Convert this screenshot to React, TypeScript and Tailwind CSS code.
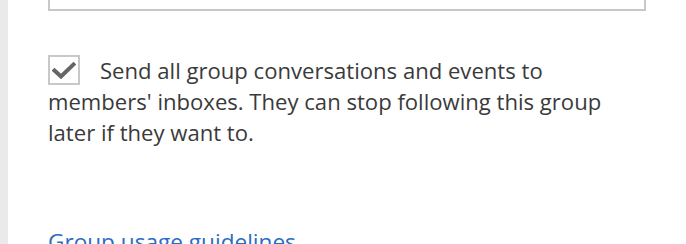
import React from "react";

export default function App() {
  return (
    <div className="flex w-[686px] h-[244px] overflow-hidden bg-white" style={{ fontFamily: '"Open Sans", "Noto Sans", sans-serif' }}>
      <div className="w-[8px] shrink-0 bg-[#eaeaea]" />
      <div className="flex-1 pl-[40px] flex flex-col">
        <div className="h-[11px] w-[598px] shrink-0 border-2 border-t-0 border-[#c8c8c8]" />
        <p className="mt-[44px] w-[575px] text-[22.1px] leading-[31px] text-[#3a3a3a]">
          <span className="inline-flex align-top mt-[0px] mr-[20px] w-[32px] h-[30px] border-2 border-[#c8c8c8] items-center justify-center">
            <svg width="24" height="17" viewBox="0 0 24 17">
              <path d="M2.5 8.5 L9 14.5 L21.5 2.5" fill="none" stroke="#666666" strokeWidth="4" strokeLinecap="square" />
            </svg>
          </span>
          Send all group conversations and events to members' inboxes. They can stop following this group later if they want to.
        </p>
        <a className="mt-[78px] text-[22.6px] leading-[31px] text-[#2b6cc4]" href="#">Group usage guidelines</a>
      </div>
    </div>
  );
}
